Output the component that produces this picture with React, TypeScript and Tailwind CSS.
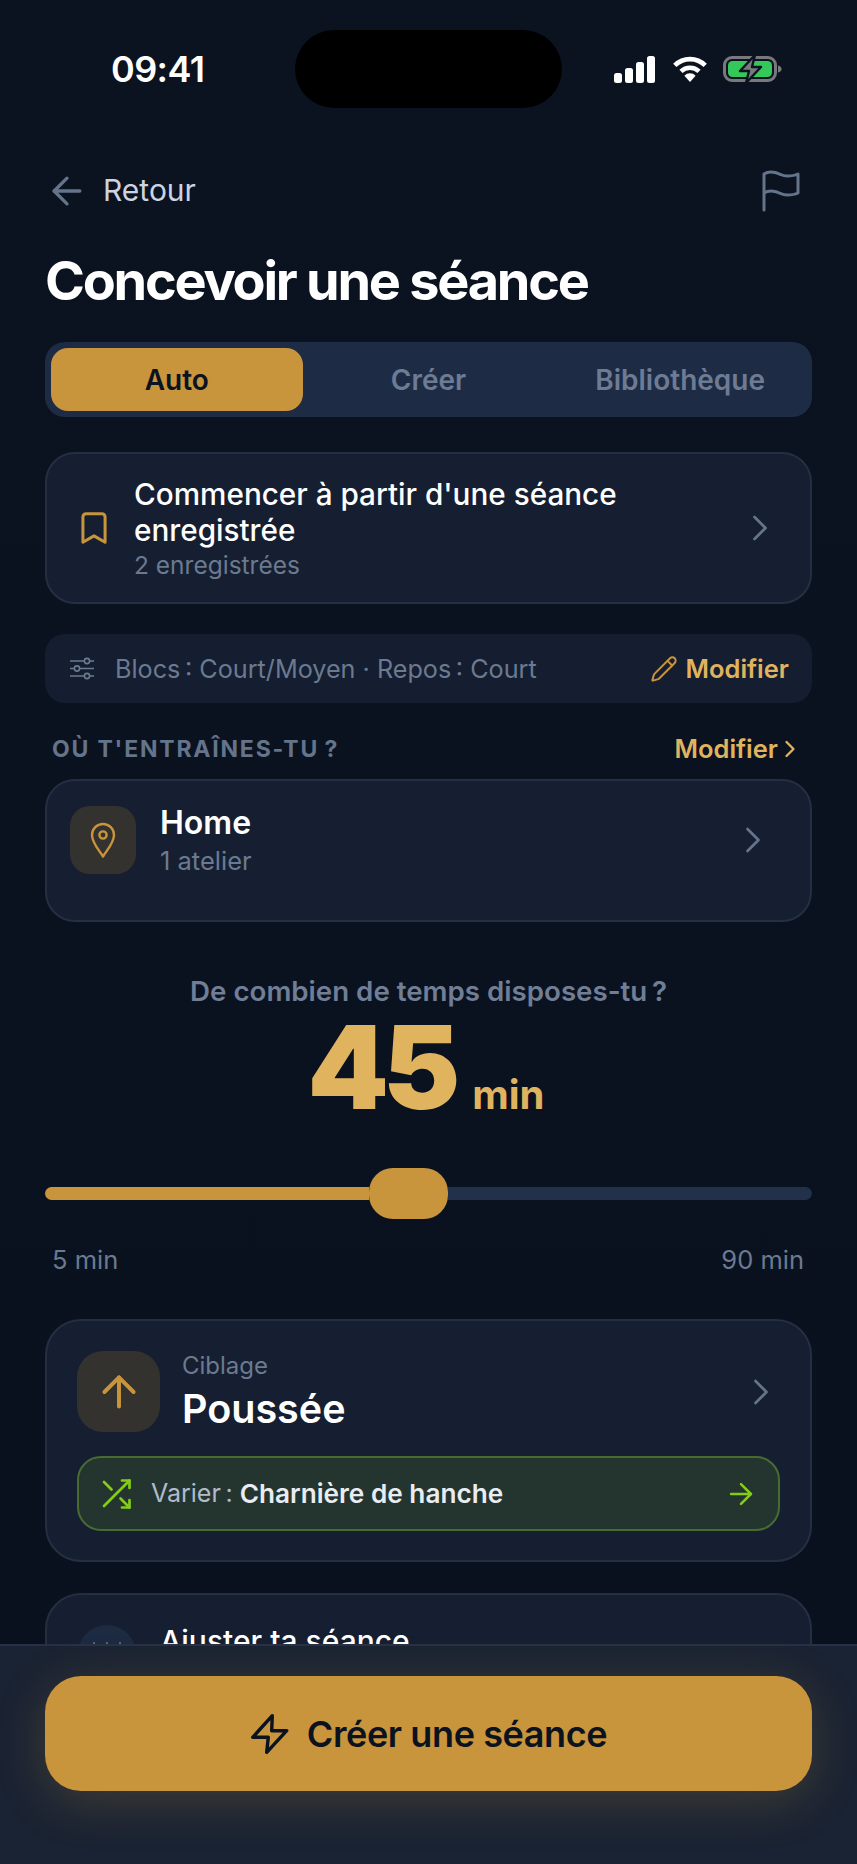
import { ArrowLeft, ArrowRight, ArrowUp, Bookmark, ChevronRight, Pencil } from 'lucide-react';

const cardStyle = 'rounded-[30px] border-2 border-[#252f42] bg-[#161f31]';

function StatusIcons() {
  return (
    <div className="flex items-center">
      <svg width="42" height="27" viewBox="0 0 42 27" fill="#ffffff">
        <rect x="0" y="17" width="8" height="10" rx="2.5" />
        <rect x="11" y="12" width="8" height="15" rx="2.5" />
        <rect x="22" y="6" width="8" height="21" rx="2.5" />
        <rect x="33" y="0" width="8" height="27" rx="2.5" />
      </svg>
      <svg className="ml-[17px]" width="34" height="26" viewBox="0 0 34 26" fill="none" stroke="#ffffff" strokeWidth="4.6">
        <path d="M1.8 9.4a21.5 21.5 0 0 1 30.4 0" />
        <path d="M8 15.4a13 13 0 0 1 18 0" />
        <path d="M17 26l-5.6-6.2a7.6 7.6 0 0 1 11.2 0z" fill="#ffffff" stroke="none" />
      </svg>
      <svg className="ml-[16px]" width="59" height="30" viewBox="0 0 59 30" fill="none">
        <rect x="1.5" y="3.5" width="51" height="23" rx="7.5" stroke="#77797c" strokeWidth="3" />
        <rect x="5" y="7" width="44" height="16" rx="4.5" fill="#34c759" />
        <path d="M55 11.5c2.6.6 3.6 2 3.6 3.5s-1 2.9-3.6 3.5z" fill="#77797c" />
        <path d="M32 1L17 17h9l-3 12 15-16h-9z" fill="#77797c" stroke="#0b1220" strokeWidth="2.4" strokeLinejoin="round" />
      </svg>
    </div>
  );
}

function StatusBar() {
  return (
    <div className="mt-[30px] flex h-[78px] items-center pl-[111px] pr-[75px]">
      <span className="w-[184px] text-[36px] font-semibold leading-none tracking-[-0.6px] text-white">09:41</span>
      <div className="h-[78px] w-[267px] rounded-[39px] bg-black" />
      <div className="ml-auto">
        <StatusIcons />
      </div>
    </div>
  );
}

function FlagIcon() {
  return (
    <svg width="40" height="44" viewBox="0 0 40 44" fill="none" stroke="#64748b" strokeWidth="3" strokeLinecap="round" strokeLinejoin="round">
      <path d="M2 41V5c3-2 7-2.5 11-1.5s8 3.5 12 3.5c4 0 9-1 11-2v19c-2 1-7 2-11 2-4 0-8-2.5-12-3.5s-8-.5-11 1.5" />
    </svg>
  );
}

function Tabs() {
  return (
    <div className="mt-[31px] grid h-[75px] grid-cols-3 rounded-[20px] bg-[#1d2c44] p-[6px] text-[28px] font-semibold">
      <div className="flex items-center justify-center rounded-[17px] bg-[#c8943c] pt-[1px] text-[#0b1220]">Auto</div>
      <div className="flex items-center justify-center pt-[1px] text-[#6d7b94]">Créer</div>
      <div className="flex items-center justify-center pt-[1px] text-[#6d7b94]">Bibliothèque</div>
    </div>
  );
}

function SavedCard() {
  return (
    <div className={`mt-[35px] flex h-[152px] items-center pl-[28px] pr-[28px] ${cardStyle}`}>
      <Bookmark size={38} strokeWidth={1.9} className="shrink-0 text-[#c8943c]" />
      <div className="ml-[21px] flex-1 pt-[2px]">
        <div className="text-[29.7px] font-medium leading-[36px] text-white">
          Commencer à partir d'une séance
          <br />
          enregistrée
        </div>
        <div className="text-[24.5px] leading-[34px] text-[#6b7a90]">2 enregistrées</div>
      </div>
      <ChevronRight size={44} strokeWidth={1.5} className="shrink-0 text-[#64748b]" />
    </div>
  );
}

function SettingsBar() {
  return (
    <div className="mt-[30px] flex h-[69px] items-center rounded-[20px] bg-[#141e30] pl-[24px] pr-[23px]">
      <svg width="26" height="24" viewBox="0 0 26 24" fill="#141e30" stroke="#6b7a90" strokeWidth="1.6">
        <path d="M1 4h24M1 11.5h24M1 19h24" />
        <circle cx="18" cy="4" r="2.6" />
        <circle cx="8" cy="11.5" r="2.6" />
        <circle cx="18" cy="19" r="2.6" />
      </svg>
      <span className="ml-[20px] pt-[2px] text-[25.2px] text-[#6b7a90]">Blocs{'\u2009'}: Court/Moyen · Repos{'\u2009'}: Court</span>
      <div className="ml-auto flex items-center gap-[7px] text-[25.5px] font-semibold text-[#e0b35f]">
        <Pencil size={28} strokeWidth={1.7} className="text-[#c8943c]" />
        <span className="pt-[2px]">Modifier</span>
      </div>
    </div>
  );
}

function LocationCard() {
  return (
    <div className={`mt-[16px] flex h-[143px] pl-[23px] pr-[35px] pt-[25px] ${cardStyle}`}>
      <div className="flex h-[68px] w-[66px] shrink-0 items-center justify-center rounded-[20px] bg-[#33322f]">
        <svg width="26" height="36" viewBox="0 0 26 36" fill="none" stroke="#c8943c" strokeWidth="2.4" strokeLinejoin="round">
          <path d="M13 34.5C9 28 2 21 2 13a11 11 0 0 1 22 0C24 21 17 28 13 34.5z" />
          <circle cx="13" cy="13" r="3.6" />
        </svg>
      </div>
      <div className="ml-[24px] flex-1 -mt-[2px]">
        <div className="text-[32px] font-semibold leading-[38px] text-white">Home</div>
        <div className="mt-[2px] text-[25.5px] leading-[34px] text-[#6b7a90]">1 atelier</div>
      </div>
      <ChevronRight size={44} strokeWidth={1.5} className="mt-[12px] shrink-0 text-[#64748b]" />
    </div>
  );
}

function DurationSlider() {
  return (
    <>
      <div className="mb-[1px] mt-[53px] text-center text-[27.7px] font-semibold leading-[32px] text-[#707e96]">
        De combien de temps disposes-tu{'\u2009'}?
      </div>
      <div className="flex h-[118px] items-baseline justify-center pr-[5px] text-[#e0b35f]">
        <span className="text-[116px] font-black leading-[118px] tracking-[-6px]">45</span>
        <span className="ml-[18px] text-[40px] font-bold">min</span>
      </div>
      <div className="mt-[42px] flex h-[51px] items-center">
        <div className="h-[13px] w-[324px] rounded-l-full bg-[#c8943c]" />
        <div className="h-[51px] w-[79px] shrink-0 rounded-[24px] bg-[#c8943c]" />
        <div className="h-[13px] flex-1 rounded-r-full bg-[#22304a]" />
      </div>
      <div className="mt-[25px] flex justify-between pl-[7px] pr-[8px] text-[25.5px] leading-[32px] text-[#6b7a90]">
        <span>5 min</span>
        <span>90 min</span>
      </div>
    </>
  );
}

function TargetCard() {
  return (
    <div className="mt-[43px] h-[243px] rounded-[36px] border-2 border-[#252f42] bg-[#161f31] px-[30px] pt-[30px]">
      <div className="flex h-[81px]">
        <div className="flex h-[81px] w-[83px] shrink-0 items-center justify-center rounded-[26px] bg-[#33322f]">
          <ArrowUp size={50} strokeWidth={1.9} className="text-[#c8943c]" />
        </div>
        <div className="ml-[22px] flex-1 -mt-[1px]">
          <div className="text-[24px] leading-[32px] text-[#6b7a90]">Ciblage</div>
          <div className="mt-[2px] text-[39.5px] font-semibold leading-[50px] text-white">Poussée</div>
        </div>
        <ChevronRight size={44} strokeWidth={1.5} className="mt-[19px] -mr-[3px] shrink-0 text-[#64748b]" />
      </div>
      <div className="mt-[24px] flex h-[75px] items-center rounded-[24px] border-2 border-[#4a6b30] bg-[#24352f] pl-[19px] pr-[20px]">
        <svg width="36" height="36" viewBox="0 0 24 24" fill="none" stroke="#84cc16" strokeWidth="1.8" strokeLinecap="round" strokeLinejoin="round">
          <path d="M16 3h5v5" />
          <path d="M4 20 21 3" />
          <path d="M21 16v5h-5" />
          <path d="m15 15 6 6" />
          <path d="m4 4 5 5" />
        </svg>
        <span className="ml-[17px] text-[25px] text-[#b0bccb]">Varier{'\u2009'}:&nbsp;</span>
        <span className="text-[26.2px] font-semibold text-[#e8edf3]">Charnière de hanche</span>
        <ArrowRight size={34} strokeWidth={1.8} className="ml-auto text-[#84cc16]" />
      </div>
    </div>
  );
}

function AdjustCard() {
  return (
    <div className="mt-[31px] flex h-[200px] rounded-[36px] border-2 border-[#252f42] bg-[#161f31] pl-[31px] pt-[30px]">
      <div className="flex h-[58px] w-[58px] justify-center gap-[11px] rounded-full bg-[#1c2a42] pt-[17px]">
        <div className="h-[2px] w-[2px] rounded-full bg-[#64748b]" />
        <div className="h-[2px] w-[2px] rounded-full bg-[#64748b]" />
        <div className="h-[2px] w-[2px] rounded-full bg-[#64748b]" />
      </div>
      <div className="ml-[24px] -mt-[2px] text-[30px] font-medium leading-[36px] text-white">Ajuster ta séance</div>
    </div>
  );
}

function Footer() {
  return (
    <div className="absolute inset-x-0 bottom-0 h-[220px] border-t-2 border-[#263145] bg-[#1a2333] px-[45px] pt-[30px]">
      <div className="flex h-[115px] items-center justify-center gap-[18px] rounded-[36px] bg-[#c8943c] text-[36px] font-semibold tracking-[-0.4px] text-[#0b1220] shadow-[0_10px_50px_rgba(200,148,60,0.22)]">
        <svg width="39" height="42" viewBox="0 0 39 42" fill="none" stroke="#0b1220" strokeWidth="3.4" strokeLinejoin="round">
          <path d="M22.3 2.7 2.7 24.3h15.6l-1.6 15 20-21.6h-15z" />
        </svg>
        Créer une séance
      </div>
    </div>
  );
}

export default function App() {
  return (
    <div className="relative h-[1864px] w-[857px] overflow-hidden bg-gradient-to-b from-[#0c1320] to-[#0a111e] font-['Inter',sans-serif]">
      <StatusBar />
      <div className="px-[45px]">
        <div className="mt-[62px] flex h-[41px] items-center">
          <ArrowLeft size={44} strokeWidth={1.8} className="text-[#64748b]" />
          <span className="ml-[14px] text-[30px] text-[#cbd5e1]">Retour</span>
          <div className="ml-auto mr-[10px]">
            <FlagIcon />
          </div>
        </div>
        <h1 className="mt-[40px] text-[54px] font-bold leading-[60px] tracking-[-2.25px] text-white">
          Concevoir une séance
        </h1>
        <Tabs />
        <SavedCard />
        <SettingsBar />
        <div className="mt-[30px] flex h-[30px] items-center pl-[7px] pr-[8px] pt-[2px]">
          <span className="text-[23px] font-bold tracking-[1.8px] text-[#64748b]">OÙ T'ENTRAÎNES-TU{'\u2009'}?</span>
          <span className="ml-auto text-[25.5px] font-semibold text-[#e0b35f]">Modifier</span>
          <ChevronRight size={28} strokeWidth={2} className="-ml-[2px] text-[#e0b35f]" />
        </div>
        <LocationCard />
        <DurationSlider />
        <TargetCard />
        <AdjustCard />
      </div>
      <Footer />
    </div>
  );
}
